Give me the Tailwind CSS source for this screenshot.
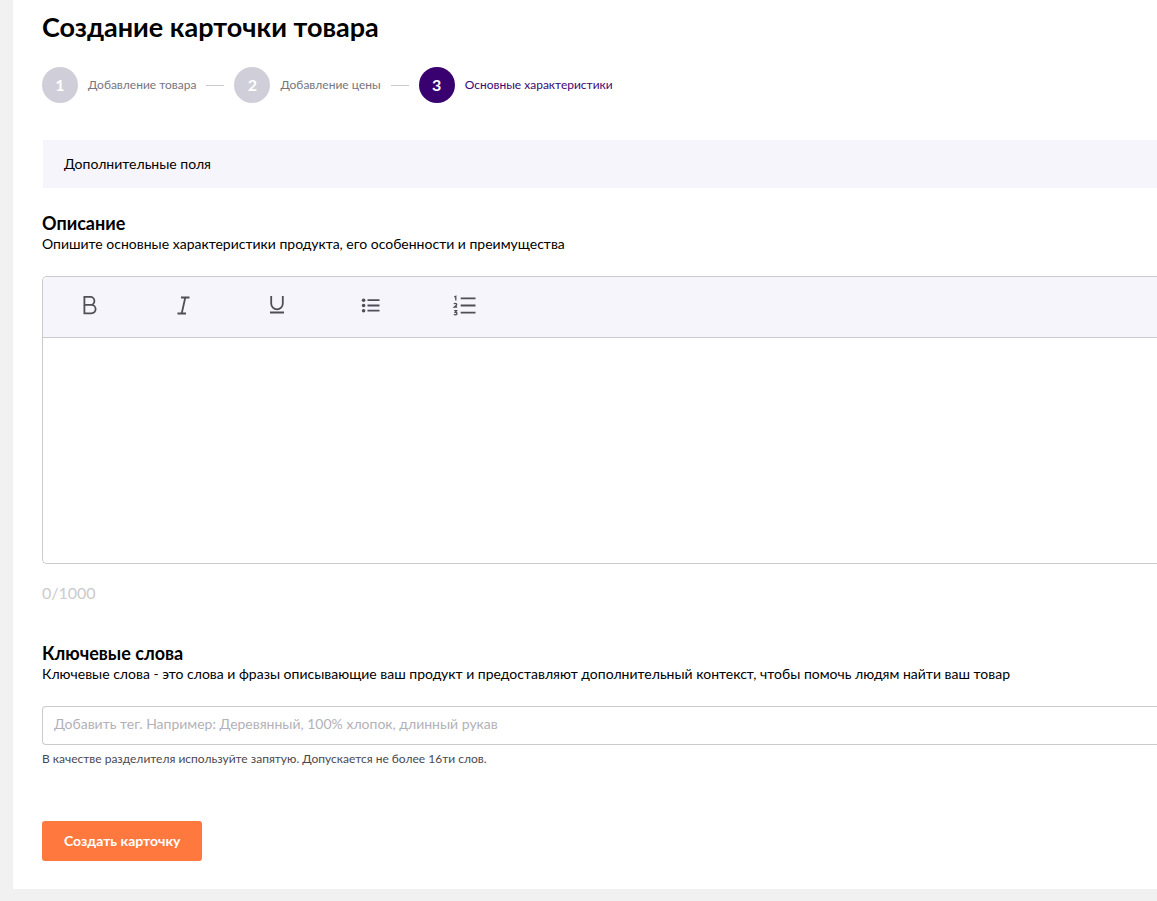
<!DOCTYPE html>
<html lang="ru">
<head>
  <meta charset="UTF-8">
  <meta name="viewport" content="width=device-width, initial-scale=1.0">
  <title>Создание карточки товара</title>
  <script src="https://cdn.jsdelivr.net/npm/@tailwindcss/browser@4"></script>
</head>
<body class="min-h-screen bg-[#f1f1f1] pl-[13px] pb-3 font-['Lato',sans-serif] text-black">

  <main class="bg-white pl-[29px] pt-[11px] pb-7">
    <h1 class="text-[27px] leading-8 font-bold">Создание карточки товара</h1>

    <!-- Steps -->
    <ol class="mt-6 flex items-center text-xs leading-5 text-[#77757f]">
      <li class="flex items-center gap-[10px]">
        <span class="flex size-9 items-center justify-center rounded-full bg-[#d0ced8] text-base font-bold text-white">1</span>
        <span>Добавление товара</span>
        <span class="mr-[10px] h-px w-[18px] bg-[#c9c7cf]"></span>
      </li>
      <li class="flex items-center gap-[10px]">
        <span class="flex size-9 items-center justify-center rounded-full bg-[#d0ced8] text-base font-bold text-white">2</span>
        <span>Добавление цены</span>
        <span class="mr-[10px] h-px w-[18px] bg-[#c9c7cf]"></span>
      </li>
      <li class="flex items-center gap-[10px] text-[#3b0873]" aria-current="step">
        <span class="flex size-9 items-center justify-center rounded-full bg-[#390070] text-base font-bold text-white">3</span>
        <span>Основные характеристики</span>
      </li>
    </ol>

    <div class="mt-[37px] ml-px bg-[#f6f5fb] px-[21px] py-3 text-sm leading-6">Дополнительные поля</div>

    <!-- Description -->
    <section class="mt-6">
      <h2 class="text-lg leading-[22px] font-bold"><label for="description">Описание</label></h2>
      <p class="text-sm leading-5">Опишите основные характеристики продукта, его особенности и преимущества</p>

      <div class="mt-[22px] rounded-l-[5px] border border-r-0 border-[#cbcacd]">
        <div class="flex h-[61px] rounded-tl-[4px] border-b border-[#cbcacd] bg-[#f6f5fb] pb-1 text-[#504e57]">
          <button type="button" aria-label="Полужирный" class="flex w-[94px] items-center justify-center">
            <svg class="size-6" viewBox="0 0 24 24" fill="none" stroke="currentColor" stroke-width="1.8">
              <path d="M6.4 3.9h6a4 4 0 0 1 0 8h-6zM6.4 11.9h7a4.2 4.2 0 0 1 0 8.4h-7z"/>
            </svg>
          </button>
          <button type="button" aria-label="Курсив" class="flex w-[94px] items-center justify-center">
            <svg class="size-6" viewBox="0 0 24 24" fill="none" stroke="currentColor" stroke-width="1.8">
              <path d="M9 4.5h8.5M5.5 20.5H14M13.3 4.5L9.7 20.5"/>
            </svg>
          </button>
          <button type="button" aria-label="Подчёркнутый" class="flex w-[94px] items-center justify-center">
            <svg class="size-6" viewBox="0 0 24 24" fill="none" stroke="currentColor" stroke-width="1.8">
              <path d="M5.2 3v7.6a5.8 5.8 0 0 0 11.6 0V3M4 19.5h14"/>
            </svg>
          </button>
          <button type="button" aria-label="Маркированный список" class="flex w-[94px] items-center justify-center">
            <svg class="size-6" viewBox="0 0 24 24" fill="none" stroke="currentColor" stroke-width="1.8">
              <path d="M7.5 7.2h12M7.5 12.5h12M7.5 17.7h12"/>
              <g fill="currentColor" stroke="none">
                <circle cx="3.6" cy="7.2" r="1.8"/><circle cx="3.6" cy="12.5" r="1.8"/><circle cx="3.6" cy="17.7" r="1.8"/>
              </g>
            </svg>
          </button>
          <button type="button" aria-label="Нумерованный список" class="flex w-[94px] items-center justify-center">
            <svg class="size-6 overflow-visible" viewBox="0 0 24 24" fill="none" stroke="currentColor" stroke-width="1.8">
              <path d="M6.7 5.3h14.8M6.7 12.5h14.8M6.7 19.7h14.8"/>
              <path stroke-width="1.3" d="M.2 4l1.6-.8v4.4M0 11.2q.2-.8 1.4-.8 1.3 0 1.3 1 0 .7-.9 1.3L.3 14h2.8M.2 17.7h2.4l-1.3 1.6q1.7 0 1.7 1.3 0 1.2-1.5 1.2-1.1 0-1.5-.7"/>
            </svg>
          </button>
        </div>
        <textarea id="description" maxlength="1000" class="block h-[225px] w-full resize-none px-3 py-2 text-sm leading-5 outline-none"></textarea>
      </div>
      <p class="mt-[19px] text-base leading-5 text-[#cbcacd]">0/1000</p>
    </section>

    <!-- Keywords -->
    <section class="mt-[39px]">
      <h2 class="text-lg leading-[22px] font-bold"><label for="keywords">Ключевые слова</label></h2>
      <p class="text-sm leading-5">Ключевые слова - это слова и фразы описывающие ваш продукт и предоставляют дополнительный контекст, чтобы помочь людям найти ваш товар</p>
      <input id="keywords" type="text" placeholder="Добавить тег. Например: Деревянный, 100% хлопок, длинный рукав"
             class="mt-[22px] block h-[39px] w-full rounded-l-[4px] border border-r-0 border-[#cbcacd] px-[11px] pb-1 text-sm outline-none placeholder:text-[#b3b1b8]">
      <p class="mt-1 text-xs leading-5 text-[#4a484f]">В качестве разделителя используйте запятую. Допускается не более 16ти слов.</p>
    </section>

    <button type="submit" class="mt-13 block h-10 rounded-[3px] bg-[#ff793f] px-[22px] text-sm font-bold text-white">Создать карточку</button>
  </main>

</body>
</html>
